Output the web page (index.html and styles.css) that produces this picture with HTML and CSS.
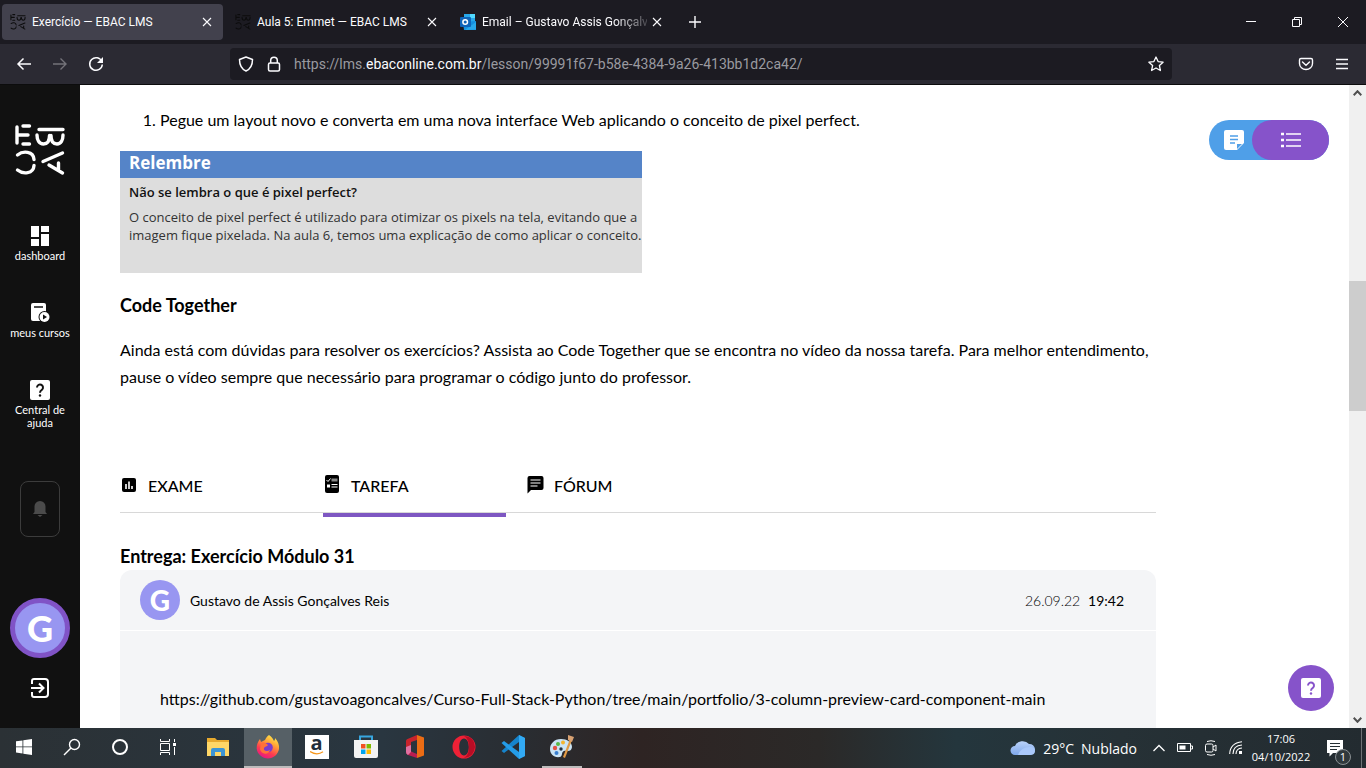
FILE: index.html
```html
<!DOCTYPE html>
<html lang="pt-BR">
<head>
<meta charset="utf-8">
<title>Exercício — EBAC LMS</title>
<link rel="stylesheet" href="styles.css">
</head>
<body>
<svg class="defs" width="0" height="0" aria-hidden="true">
  <symbol id="ebac" viewBox="0 0 50 52">
    <g fill="none" stroke="currentColor" stroke-width="3.400" stroke-linecap="round">
      <path d="M2 3v16M8 2h6.500M3 11h10M8 20h6.500"/>
      <path d="M24 5.500h24M22 11c0 5 2 9 6.500 9s6-3 6-8.500M36 11.500c0 5.500 2 8.500 6 8.500s6-4 6-9"/>
      <path d="M2.500 31C8 26.500 18.500 27 19 35.500M2.500 46C8 50.500 18.500 50 19 41.500"/>
      <path d="M28 37.500l19.500-8.500M34 41l13.500 8M43.500 39v6"/>
    </g>
  </symbol>
  <symbol id="close" viewBox="0 0 10 10"><path d="M1 1l8 8M9 1l-8 8" fill="none" stroke="currentColor" stroke-width="1.100"/></symbol>
</svg>

<header class="browser">
  <div class="tabstrip">
    <div class="tab tab-active">
      <svg class="favicon"><use href="#ebac"/></svg>
      <span class="tab-title">Exercício — EBAC LMS</span>
      <button class="tab-close" aria-label="Fechar aba"><svg width="10" height="10"><use href="#close"/></svg></button>
    </div>
    <div class="tab">
      <svg class="favicon"><use href="#ebac"/></svg>
      <span class="tab-title">Aula 5: Emmet — EBAC LMS</span>
      <button class="tab-close" aria-label="Fechar aba"><svg width="10" height="10"><use href="#close"/></svg></button>
    </div>
    <div class="tab tab-long">
      <svg class="favicon" viewBox="0 0 16 16">
        <path d="M4 0h11v8H4z" fill="#28a8ea"/><path d="M10 0h5v4h-5z" fill="#50d9ff"/><path d="M4 4h6v5H4z" fill="#0364b8"/>
        <path d="M3 8l13-1v9H4z" fill="#1490df"/><path d="M5 16l11-8v7.500z" fill="#28a8ea"/>
        <rect y="3" width="11" height="10" rx="1" fill="#0f64b8"/><circle cx="5.200" cy="8" r="2.300" fill="none" stroke="#fff" stroke-width="1.500"/>
      </svg>
      <span class="tab-title">Email – Gustavo Assis Gonçalves</span>
      <button class="tab-close" aria-label="Fechar aba"><svg width="10" height="10"><use href="#close"/></svg></button>
    </div>
    <button class="new-tab" aria-label="Nova aba"><svg width="12" height="12" viewBox="0 0 12 12"><path d="M6 0v12M0 6h12" stroke="currentColor" stroke-width="1.400"/></svg></button>
    <div class="window-controls">
      <button aria-label="Minimizar"><svg width="10" height="10"><path d="M0 4.500h10" stroke="currentColor"/></svg></button>
      <button aria-label="Restaurar"><svg width="10" height="10" fill="none" stroke="currentColor"><path d="M.5 2.500h7v7h-7zM2.500 2.500v-2h7v7h-2"/></svg></button>
      <button aria-label="Fechar"><svg width="10" height="10"><path d="M0 0l10 10M10 0L0 10" stroke="currentColor"/></svg></button>
    </div>
  </div>
  <div class="toolbar">
    <div class="nav-buttons">
      <button aria-label="Voltar"><svg width="16" height="16" viewBox="0 0 16 16"><path d="M15 8H2M7.500 2.500L2 8l5.500 5.500" fill="none" stroke="currentColor" stroke-width="1.500"/></svg></button>
      <button aria-label="Avançar" disabled><svg width="16" height="16" viewBox="0 0 16 16"><path d="M1 8h13M8.500 2.500L14 8l-5.500 5.500" fill="none" stroke="currentColor" stroke-width="1.400"/></svg></button>
      <button aria-label="Recarregar"><svg width="16" height="16" viewBox="0 0 16 16"><path d="M13.800 5.500A6.300 6.300 0 1 0 14.300 8.500" fill="none" stroke="currentColor" stroke-width="1.500"/><path d="M15 1v6H9z" fill="currentColor"/></svg></button>
    </div>
    <div class="urlbar">
      <svg width="16" height="16" viewBox="0 0 16 16"><path d="M8 1l6.500 2.500c0 6-2 9.500-6.500 11.500C3.500 13 1.500 9.500 1.500 3.500z" fill="none" stroke="currentColor" stroke-width="1.500" stroke-linejoin="round"/></svg>
      <svg width="16" height="16" viewBox="0 0 16 16"><g fill="none" stroke="currentColor" stroke-width="1.500"><rect x="2.500" y="7" width="11" height="8" rx="1.500"/><path d="M4.700 7V4.500a3.300 3.300 0 0 1 6.600 0V7"/></g></svg>
      <span class="url">https://lms.<strong>ebaconline.com.br</strong>/lesson/99991f67-b58e-4384-9a26-413bb1d2ca42/</span>
      <button aria-label="Favoritar"><svg width="16" height="16" viewBox="0 0 16 16"><path d="M8 1l2.100 4.600 5 .6-3.700 3.300 1 5L8 12l-4.400 2.500 1-5L.9 6.200l5-.6z" fill="none" stroke="currentColor" stroke-width="1.300" stroke-linejoin="round"/></svg></button>
    </div>
    <div class="toolbar-end">
      <button aria-label="Pocket"><svg width="16" height="16" viewBox="0 0 16 16"><g fill="none" stroke="currentColor" stroke-width="1.400"><path d="M3 2.500h10q1.500 0 1.500 1.500v3.500a6.500 6 0 0 1-13 0V4Q1.500 2.500 3 2.500z"/><path d="M4.500 6L8 9.200 11.500 6" stroke-linecap="round"/></g></svg></button>
      <button aria-label="Menu"><svg width="12" height="12" viewBox="0 0 12 12"><path d="M0 1.500h12M0 6h12M0 10.500h12" stroke="currentColor" stroke-width="1.300"/></svg></button>
    </div>
  </div>
</header>

<div class="app">
  <nav class="sidebar">
    <a class="logo" href="#" aria-label="EBAC"><svg width="50" height="52"><use href="#ebac"/></svg></a>
    <div class="side-links">
      <a href="#"><svg width="20" height="20" viewBox="0 0 20 20"><path fill="currentColor" d="M1 0h8v11H1zM11 0h8v6h-8zM1 13h8v7H1zM11 8h8v12h-8z"/></svg>dashboard</a>
      <a href="#"><svg width="20" height="20" viewBox="0 0 20 20"><rect x="1" y="0" width="15" height="18" rx="2" fill="currentColor"/><path d="M4 4h9" stroke="#111" stroke-width="1.500"/><circle cx="14.500" cy="14" r="6" fill="#111"/><circle cx="14.500" cy="14" r="5" fill="currentColor"/><path d="M13 11.500v5l4-2.500z" fill="#111"/></svg>meus cursos</a>
      <a href="#"><svg width="20" height="20" viewBox="0 0 20 20"><rect width="20" height="20" rx="2" fill="currentColor"/><path d="M7 7.500a3 3 0 1 1 5 2.200c-1.300 1-2 1.500-2 3" fill="none" stroke="#111" stroke-width="2"/><circle cx="10" cy="15.500" r="1.200" fill="#111"/></svg>Central de ajuda</a>
    </div>
    <button class="bell" aria-label="Notificações"><svg width="16" height="18" viewBox="0 0 16 18"><path d="M1 14l1.500-2V7A5.500 5.500 0 0 1 8 1a5.500 5.500 0 0 1 5.500 6v5l1.500 2zM5.500 15h5L8 17z" fill="currentColor"/></svg></button>
    <a class="avatar avatar-large" href="#">G</a>
    <a class="exit" href="#" aria-label="Sair"><svg width="20" height="20" viewBox="0 0 20 20"><g fill="none" stroke="currentColor" stroke-width="2"><path d="M2 6V3q0-2 2-2h11q3 0 3 3v12q0 3-3 3H4q-2 0-2-2v-3"/><path d="M1 10h12M9 5.500l4.500 4.500L9 14.500"/></g></svg></a>
  </nav>

  <main class="content">
    <ol class="steps"><li>Pegue um layout novo e converta em uma nova interface Web aplicando o conceito de pixel perfect.</li></ol>
    <section class="callout">
      <h2>Relembre</h2>
      <div class="callout-body">
        <h3>Não se lembra o que é pixel perfect?</h3>
        <p>O conceito de pixel perfect é utilizado para otimizar os pixels na tela, evitando que a<br>imagem fique pixelada. Na aula 6, temos uma explicação de como aplicar o conceito.</p>
      </div>
    </section>
    <h2 class="heading">Code Together</h2>
    <p class="text">Ainda está com dúvidas para resolver os exercícios? Assista ao Code Together que se encontra no vídeo da nossa tarefa. Para melhor entendimento,<br>pause o vídeo sempre que necessário para programar o código junto do professor.</p>
    <nav class="lesson-tabs">
      <a href="#"><svg width="18" height="20" viewBox="0 0 18 20"><rect x="2" y="3" width="14" height="14" rx="2"/><path d="M6 9v5M9 6.500V14M12 11v3" stroke="#fff" stroke-width="1.600"/></svg>EXAME</a>
      <a class="current" href="#"><svg width="18" height="20" viewBox="0 0 18 20"><rect x="2" y="0" width="14" height="18" rx="2"/><path d="M3.500 5l1.500 1.500L7.500 3.500" fill="none" stroke="#fff"/><path d="M8.500 3.500h6v3h-6z" fill="#888"/><path d="M4 9.500h3v3H4z" fill="#fff"/><path d="M8.500 9.500h6M8.500 12h6" stroke="#fff" stroke-width="1.200"/></svg>TAREFA</a>
      <a href="#"><svg width="18" height="20" viewBox="0 0 18 20"><path d="M3.500 1h12q2 0 2 2v10q0 2-2 2H5l-3.500 3.500V3q0-2 2-2z"/><path d="M4.500 5h10M4.500 8h10M4.500 11h7" stroke="#fff" stroke-width="1.200"/></svg>FÓRUM</a>
    </nav>
    <h2 class="heading delivery">Entrega: Exercício Módulo 31</h2>
    <article class="card">
      <header class="card-head">
        <span class="avatar">G</span>
        <span class="author">Gustavo de Assis Gonçalves Reis</span>
        <time datetime="2022-09-26T19:42">26.09.22 <b>19:42</b></time>
      </header>
      <p class="card-body">https://github.com/gustavoagoncalves/Curso-Full-Stack-Python/tree/main/portfolio/3-column-preview-card-component-main</p>
    </article>
  </main>

  <div class="switcher">
    <button class="notes" aria-label="Anotações"><svg width="20" height="20" viewBox="0 0 20 20"><path d="M2 0h16q2 0 2 2v11l-7 7H2q-2 0-2-2V2Q0 0 2 0z" fill="#fff"/><path d="M6 6h8M6 9.500h8M6 13h5" stroke="#4f9fe8" stroke-width="1.700"/><path d="M13 14h5l-5 5z" fill="#4f9fe8"/></svg></button>
    <button class="list" aria-label="Lista de aulas"><svg width="20" height="16" viewBox="0 0 20 16"><path d="M5 2h15M5 8h15M5 14h15" stroke="#fff" stroke-width="1.400"/><path d="M0 2h3M0 8h3M0 14h3" stroke="#fff" stroke-width="2.500"/></svg></button>
  </div>
  <button class="help" aria-label="Ajuda"><svg width="20" height="20" viewBox="0 0 20 20"><rect width="20" height="20" rx="2" fill="#fff"/><path d="M7 7.500a3 3 0 1 1 5 2.200c-1.300 1-2 1.500-2 3" fill="none" stroke="#8653ca" stroke-width="2"/><circle cx="10" cy="15.500" r="1.200" fill="#8653ca"/></svg></button>

  <div class="scrollbar">
    <svg width="9" height="6" viewBox="0 0 9 6"><path d="M.7 5.200l3.800-4 3.800 4" fill="none" stroke="#505050" stroke-width="2"/></svg>
    <div class="track"><div class="thumb"></div></div>
    <svg width="9" height="6" viewBox="0 0 9 6"><path d="M.7.8l3.800 4 3.800-4" fill="none" stroke="#505050" stroke-width="2"/></svg>
  </div>
</div>

<footer class="taskbar">
  <div class="launchers">
    <button aria-label="Iniciar"><svg width="16" height="16" viewBox="0 0 16 16"><path fill="#fff" d="M0 2.300L6.500 1.400v6.100H0zM7.300 1.200L16 0v7.500H7.300zM0 8.300h6.500v6.200L0 13.600zM7.300 8.300H16V16l-8.700-1.200z"/></svg></button>
    <button aria-label="Pesquisar"><svg width="18" height="18" viewBox="0 0 18 18"><g fill="none" stroke="#fff" stroke-width="1.400"><circle cx="11.500" cy="6.500" r="5"/><path d="M8 10l-7 7"/></g></svg></button>
    <button aria-label="Cortana"><svg width="18" height="18"><circle cx="9" cy="9" r="7" fill="none" stroke="#fff" stroke-width="2"/></svg></button>
    <button aria-label="Visão de tarefas"><svg width="18" height="16" viewBox="0 0 18 16"><g fill="none" stroke="#fff"><path d="M1.500 0v2.500h9V0M1.500 4.500h9v7h-9zM1.500 16v-2.500h9V16M15.500 0v3M15.500 8v8"/></g><path d="M14 4h3v3h-3z" fill="#fff"/></svg></button>
    <button aria-label="Explorador de Arquivos"><svg width="22" height="20" viewBox="0 0 22 20"><path d="M0 1h8l2 2h12v16H0z" fill="#e8aa2e"/><path d="M0 5h22v14H0z" fill="#ffd767"/><path d="M4 19v-6q0-2 2-2h10q2 0 2 2v6h-4v-4H8v4z" fill="#3d95d4"/></svg></button>
    <button class="active" aria-label="Firefox"><svg width="24" height="24" viewBox="0 0 24 24">
      <defs><linearGradient id="fox" x1=".8" y1="0" x2=".3" y2="1"><stop offset="0" stop-color="#fff44f"/><stop offset=".35" stop-color="#ffa436"/><stop offset=".7" stop-color="#ff3b4f"/><stop offset="1" stop-color="#e31587"/></linearGradient></defs>
      <path d="M13 0c3 2 4 4 5 6 1-1 1-2 1-3 3 3 4.500 7 4 11-.7 5-5.500 9.500-11 9.500S1 19 .7 13.500C.5 9.500 2 6.500 4 4l1 3 4-2c1-2 2-4 4-5z" fill="url(#fox)"/><circle cx="12" cy="12.500" r="4.800" fill="#7b3dcc"/><path d="M5 8c3-1 5 0 7 2-1 2-3 1-4 3-1 3 3 4 6 2-1 5-9 5-10-1z" fill="#ff7139"/></svg></button>
    <button aria-label="Amazon"><span class="amazon">a<svg width="14" height="4" viewBox="0 0 14 4"><path d="M0 .5Q7 5 13 .8" fill="none" stroke="#f7981d" stroke-width="1.300"/></svg></span></button>
    <button aria-label="Microsoft Store"><svg width="24" height="24" viewBox="0 0 24 24"><path d="M6 6V1.500h12V6" fill="none" stroke="#38a6df" stroke-width="2"/><path d="M0 5h24v16q0 2-2 2H2q-2 0-2-2z" fill="#f3f3f3"/><path d="M7 9h4.500v4.500H7z" fill="#f25022"/><path d="M12.500 9H17v4.500h-4.500z" fill="#7fba00"/><path d="M7 14.500h4.500V19H7z" fill="#00a4ef"/><path d="M12.500 14.500H17V19h-4.500z" fill="#ffb900"/></svg></button>
    <button aria-label="Office"><svg width="20" height="24" viewBox="0 0 20 24"><path d="M12 0l7 2.500v18L12 23z" fill="#eb6c14"/><path d="M12 0v5L6 7v10l-4 1.500Q1 18 1 17V6q0-1.500 1.500-2z" fill="#c8232c"/><path d="M1 15l5 1.500L12 19v4l-9-3q-2-1-2-3z" fill="#b91d50"/><path d="M1 12l5-2v7l-3 3q-2-1-2-3z" fill="#e070a0"/></svg></button>
    <button aria-label="Opera"><svg width="24" height="24" viewBox="0 0 24 24"><path fill="#ef2136" fill-rule="evenodd" d="M12 .5a11.500 11.500 0 1 0 0 23 11.500 11.500 0 0 0 0-23zm0 3c3 0 4.800 4 4.800 8.500S15 20.500 12 20.500 7.200 16.500 7.200 12 9 3.500 12 3.500z"/><path d="M12 1q10 0 11 11-1 10-11 11 5-3 5-11T12 1z" fill="#b70d25"/></svg></button>
    <button aria-label="Visual Studio Code"><svg width="24" height="24" viewBox="0 0 24 24"><path d="M18 0l6 3v18l-6 3V7L3 18l-2.500-2z" fill="#1684cc"/><path d="M18 24L.5 8 3 6l15 11z" fill="#249ce8"/><path d="M18 0l6 3v18l-6 3z" fill="#32aaf4"/></svg></button>
    <button class="running" aria-label="Paint"><svg width="24" height="24" viewBox="0 0 24 24"><path d="M11 4C4 4 0 9 0 14s4 9 10 8c3-1 1-5 4-6s7 2 8-4c0-5-5-8-11-8z" fill="#cbe4f5"/><circle cx="5" cy="13" r="2.200" fill="#e35345"/><circle cx="8" cy="9" r="2" fill="#58b947"/><circle cx="13" cy="7.500" r="2" fill="#f5b52e"/><circle cx="6.500" cy="18" r="2" fill="#397fd0"/><circle cx="11" cy="14" r="1.700" fill="#26313c"/><path d="M20 4l2 1-7 18-2-1z" fill="#e19a45"/><path d="M18 0l6 2-2 5-4-2z" fill="#d7a172"/></svg></button>
  </div>
  <div class="tray">
    <div class="weather">
      <svg width="26" height="18" viewBox="0 0 26 18"><defs><linearGradient id="cloud" x2="0" y2="1"><stop stop-color="#b9d2f9"/><stop offset="1" stop-color="#7fa8eb"/></linearGradient></defs><path d="M5 16a4.500 4.500 0 0 1 0-9 8 7 0 0 1 14-2 5.500 5.500 0 0 1 1 11z" fill="url(#cloud)"/><path d="M8 16q3-8 12-8 5 0 5 4t-5 4z" fill="#a9c8fa"/></svg>
      <span>29°C</span><span>Nublado</span>
    </div>
    <svg width="12" height="8" viewBox="0 0 12 8"><path d="M.5 7L6 1.500 11.500 7" fill="none" stroke="#fff" stroke-width="1.300"/></svg>
    <svg width="16" height="10" viewBox="0 0 16 10"><path d="M.5.500h13v8H.5zM14 3h1.500v3H14" fill="none" stroke="#fff"/><path d="M2.500 2.500h6v4h-6z" fill="#fff"/></svg>
    <svg width="12" height="16" viewBox="0 0 12 16"><g fill="none" stroke="#fff"><rect x=".5" y="4" width="7.500" height="8" rx="1.500"/><path d="M8 7l3-2v6L8 9M2 1.500q4-1.500 8 0M2 14.500q4 1.500 8 0"/></g></svg>
    <svg width="14" height="14" viewBox="0 0 14 14"><g fill="none" stroke="#fff" stroke-width="1.100"><path d="M.7 13Q1 2 13 .7M4 13q0-8.500 9-9M7 13q0-5.500 6-6"/></g><path d="M10 10h3v3h-3z" fill="#fff"/></svg>
    <div class="clock"><span>17:06</span><span>04/10/2022</span></div>
    <button class="notice" aria-label="Notificações do sistema"><svg width="16" height="17" viewBox="0 0 16 17"><path d="M0 0h16v13H6l-3.500 3.500V13H0z" fill="#fff"/><path d="M3 3.500h10M3 6.500h10M3 9.500h7" stroke="#263035" stroke-width="1.200"/></svg><span class="badge">1</span></button>
  </div>
</footer>
</body>
</html>
```

FILE: styles.css
```css
* { box-sizing: border-box; }
body {
  margin: 0;
  height: 100vh;
  display: flex;
  flex-direction: column;
  overflow: hidden;
  background: #fff;
  color: #000;
  font-family: Lato, "Open Sans", sans-serif;
}
button { display: inline-flex; align-items: center; justify-content: center; padding: 0; border: 0; background: none; color: inherit; font: inherit; }
a { color: inherit; text-decoration: none; }
h2, h3, p, ol { margin: 0; }
svg { display: block; flex: none; }
.defs { position: absolute; }

.browser { flex: none; background: #1c1b22; color: #fbfbfe; font-family: Roboto, "Open Sans", sans-serif; border-bottom: 1px solid #0c0c0d; }
.tabstrip { display: flex; align-items: center; height: 44px; padding-left: 2px; }
.tab { display: flex; align-items: center; gap: 6px; flex: 0 1 221px; min-width: 0; height: 36px; margin-right: 4px; padding: 0 10px 0 8px; border-radius: 4px; font-size: 12px; }
.tab-active { background: #42414d; }
.favicon { width: 16px; height: 16px; color: #0c0c0d; }
.tab-title { flex: 1; min-width: 0; white-space: nowrap; }
.tab-close { width: 12px; height: 20px; }
.tab-long { gap: 4px; }
.tab-long .tab-title { margin-left: 2px; mask-image: linear-gradient(to right, #000 80%, transparent 105%); }
.new-tab { width: 32px; height: 32px; margin-left: 2px; }
.window-controls { display: flex; margin-left: auto; }
.window-controls button { width: 46px; height: 44px; }
.toolbar { display: flex; align-items: center; height: 40px; background: #2b2a33; }
.nav-buttons { display: flex; gap: 4px; width: 230px; padding-left: 8px; }
.nav-buttons button { width: 32px; height: 32px; }
.nav-buttons button:disabled { color: #74737a; }
.urlbar { flex: 1; min-width: 0; display: flex; align-items: center; gap: 12px; height: 32px; padding: 0 8px; border-radius: 4px; background: #1c1b22; }
.url { flex: 1; min-width: 0; overflow: hidden; white-space: nowrap; color: #9a9aa0; font-size: 14px; }
.url strong { color: #fbfbfe; font-weight: 400; }
.toolbar-end { display: flex; gap: 4px; width: 194px; padding-right: 8px; justify-content: flex-end; }
.toolbar-end button { width: 32px; height: 32px; }

.app { position: relative; flex: 1; min-height: 0; display: flex; }
.sidebar { flex: none; display: flex; flex-direction: column; align-items: center; width: 80px; padding-top: 39px; background: #111; color: #fff; }
.side-links { display: flex; flex-direction: column; gap: 44px; margin-top: 53px; }
.side-links a { display: flex; flex-direction: column; align-items: center; gap: 3px; width: 64px; font-size: 11px; line-height: 13px; text-align: center; }
.side-links svg { margin-top: -3px; }
.bell { flex: none; width: 40px; height: 56px; margin-top: 52px; border: 1px solid #3c3c3c; border-radius: 8px; color: #4b4b4b; }
.avatar { flex: none; display: flex; align-items: center; justify-content: center; width: 40px; height: 40px; border-radius: 50%; background: #9896f1; color: #fff; font-size: 28px; font-weight: 900; line-height: 1; }
.avatar-large { width: 60px; height: 60px; margin-top: 61px; border: 5px solid #8053c6; font-size: 36px; }
.exit { margin-top: 20px; }

.content { flex: 1; min-width: 0; overflow: hidden; padding: 21px 193px 0 40px; font-size: 16px; line-height: 27px; white-space: nowrap; }
.steps { padding-left: 40px; }
.callout { width: 522px; height: 122px; margin-top: 18px; background: #ddd; font-family: "Open Sans", sans-serif; }
.callout h2 { padding-left: 9px; background: #5584c8; color: #fff; font-size: 17px; font-weight: 700; line-height: 24px; height: 27px; }
.callout-body { padding: 5px 9px; color: #333; font-size: 13px; line-height: 18px; }
.callout h3 { margin-bottom: 7px; color: #111; font-size: 13px; font-weight: 600; }
.heading { margin-top: 18px; font-size: 18px; line-height: 28px; }
.text { margin-top: 17px; }
.lesson-tabs { display: flex; gap: 20px; height: 56px; margin-top: 67px; border-bottom: 1px solid #d8d8d8; }
.lesson-tabs a { display: flex; align-items: center; gap: 10px; width: 183px; height: 60px; border-bottom: 4px solid transparent; font-weight: 500; }
.lesson-tabs .current { border-color: #7e57c2; }
.delivery { margin-top: 29px; }
.card { border-radius: 12px; background: #f4f5f7; }
.card-head { display: flex; align-items: center; gap: 10px; height: 61px; padding: 0 32px 0 20px; border-bottom: 1px solid #fff; font-size: 14px; }
.card-head time { margin-left: auto; font-weight: 300; }
.card-head b { margin-left: 4px; }
.card-body { padding: 54px 40px; }

.switcher { position: absolute; top: 35px; right: 37px; display: flex; width: 120px; height: 40px; border-radius: 20px; background: #4f9fe8; }
.notes { width: 43px; padding-left: 7px; }
.list { flex: 1; border-radius: 20px; background: #8653ca; }
.help { position: absolute; right: 32px; bottom: 17px; width: 46px; height: 46px; border-radius: 50%; background: #8653ca; }
.scrollbar { flex: none; display: flex; flex-direction: column; align-items: center; width: 17px; padding: 5px 0; background: #f0f0f0; }
.track { flex: 1; align-self: stretch; padding-top: 185px; }
.thumb { height: 130px; background: #cdcdcd; }

.taskbar { flex: none; display: flex; justify-content: space-between; height: 40px; background: linear-gradient(90deg, #2b3135 0%, #293640 28%, #292d32 38%, #2e2423 47%, #2b2928 60%, #24363d 70%, #263136 82%, #232b30 100%); color: #fff; font-family: "Open Sans", "Noto Sans", sans-serif; }
.launchers { display: flex; }
.launchers button { width: 49px; height: 40px; border-bottom: 2px solid transparent; }
.launchers button:nth-child(-n+4) { width: 48px; }
.launchers button:nth-child(5) { width: 52px; }
.launchers .active { width: 48px; background: #566066; border-color: #bdbcbc; }
.launchers .running { width: 40px; margin-left: 5px; border-color: #bdbcbc; }
.amazon { display: flex; flex-direction: column; align-items: center; width: 24px; height: 24px; background: #fff; color: #222e3a; font-size: 20px; font-weight: 700; line-height: 16px; }
.tray { display: flex; align-items: center; gap: 12px; border-right: 1px solid #6d7376; margin-right: 4px; padding-right: 10px; }
.weather { display: flex; align-items: center; gap: 7px; margin-right: 4px; font-size: 14px; }
.clock { display: flex; flex-direction: column; align-items: center; width: 60px; margin: 0 4px 0 -4px; font-size: 11px; line-height: 18px; }
.notice { position: relative; width: 24px; height: 40px; justify-content: flex-start; }
.badge { position: absolute; left: 8px; bottom: 3px; width: 16px; height: 16px; border: 1px solid #8b9194; border-radius: 50%; background: #30383c; font-size: 11px; line-height: 14px; text-align: center; }
```
